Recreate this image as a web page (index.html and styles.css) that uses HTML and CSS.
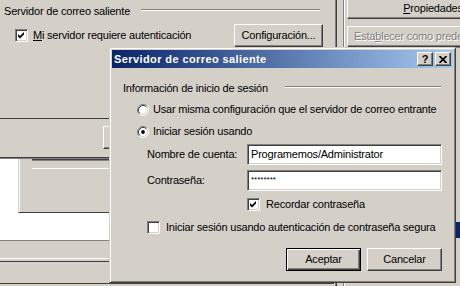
FILE: index.html
```html
<!DOCTYPE html>
<html lang="es">
<head>
<meta charset="utf-8">
<title>Servidor de correo saliente</title>
<link rel="stylesheet" href="styles.css">
</head>
<body>
<div class="screen">
  <div class="pane-left">
    <div class="group-head">
      <span class="group-label">Servidor de correo saliente</span>
      <span class="etch etch-bg"></span>
    </div>
    <div class="auth-row">
      <span class="chk">
        <span class="box"><svg class="tick" width="7" height="7" viewBox="0 0 7 7"><path d="M0 2 L2 4 L6 0 L6 2.6 L2 6.6 L0 4.6 Z" fill="#000"/></svg></span>
        <span><u>M</u>i servidor requiere autenticación</span>
      </span>
      <span class="btn btn-cfg">Confi<u>g</u>uración...</span>
    </div>
    <div class="behind">
      <div class="strip-a"><span class="btn ghost-btn"></span></div>
      <div class="strip-b">
        <div class="inner-box"><div class="inner-lines"></div></div>
      </div>
      <div class="strip-c"></div>
      <div class="strip-d"></div>
    </div>
  </div>
  <div class="divider"></div>
  <div class="pane-right">
    <span class="btn btn-wide btn-props"><u>P</u>ropiedades</span>
    <span class="btn btn-wide btn-default disabled">Esta<u>b</u>lecer como predeterminado</span>
    <div class="list">
      <div class="list-sel"></div>
    </div>
  </div>
</div>

<div class="dialog">
  <div class="titlebar">
    <span class="title">Servidor de correo saliente</span>
    <span class="tbtn help">?</span>
    <span class="tbtn close"><svg width="8" height="7" viewBox="0 0 8 7"><path d="M0.5 0 L7.5 7 M7.5 0 L0.5 7" stroke="#000" stroke-width="1.7"/></svg></span>
  </div>
  <div class="dlg-body">
    <div class="group-row">
      <span class="group-title">Información de inicio de sesión</span>
      <span class="etch"></span>
    </div>
    <div class="opt-row radio-row first">
      <svg class="radio" width="12" height="12" viewBox="0 0 12 12">
        <circle cx="6" cy="6" r="4.5" fill="#fff"/>
        <path d="M2.11 9.89 A5.5 5.5 0 0 1 9.89 2.11" fill="none" stroke="#808080"/>
        <path d="M9.89 2.11 A5.5 5.5 0 0 1 2.11 9.89" fill="none" stroke="#fff"/>
        <path d="M2.82 9.18 A4.5 4.5 0 0 1 9.18 2.82" fill="none" stroke="#404040"/>
        <path d="M9.18 2.82 A4.5 4.5 0 0 1 2.82 9.18" fill="none" stroke="#d4d0c8"/>
      </svg>
      <span>Usar misma configuración que el servidor de correo entrante</span>
    </div>
    <div class="opt-row radio-row second">
      <svg class="radio" width="12" height="12" viewBox="0 0 12 12">
        <circle cx="6" cy="6" r="4.5" fill="#fff"/>
        <path d="M2.11 9.89 A5.5 5.5 0 0 1 9.89 2.11" fill="none" stroke="#808080"/>
        <path d="M9.89 2.11 A5.5 5.5 0 0 1 2.11 9.89" fill="none" stroke="#fff"/>
        <path d="M2.82 9.18 A4.5 4.5 0 0 1 9.18 2.82" fill="none" stroke="#404040"/>
        <path d="M9.18 2.82 A4.5 4.5 0 0 1 2.82 9.18" fill="none" stroke="#d4d0c8"/>
        <circle cx="6" cy="6" r="1.9" fill="#000"/>
      </svg>
      <span>Iniciar sesión usando</span>
    </div>
    <div class="field-row name-row">
      <span class="field-label">Nombre de cuenta:</span>
      <span class="field">Programemos/Administrator</span>
    </div>
    <div class="field-row pass-row">
      <span class="field-label">Contraseña:</span>
      <span class="field pass">********</span>
    </div>
    <div class="opt-row remember-row">
      <span class="box"><svg class="tick" width="7" height="7" viewBox="0 0 7 7"><path d="M0 2 L2 4 L6 0 L6 2.6 L2 6.6 L0 4.6 Z" fill="#000"/></svg></span>
      <span>Recordar contraseña</span>
    </div>
    <div class="opt-row secure-row">
      <span class="box"></span>
      <span>Iniciar sesión usando autenticación de contraseña segura</span>
    </div>
    <div class="btn-row">
      <span class="btn dlg-btn default">Aceptar</span>
      <span class="btn dlg-btn">Cancelar</span>
    </div>
  </div>
</div>
</body>
</html>
```

FILE: styles.css
```css
* { box-sizing: border-box; }
html, body { margin: 0; padding: 0; }
body {
  width: 460px;
  height: 286px;
  overflow: hidden;
  position: relative;
  background: #d4d0c8;
  color: #000;
  font: 11px/13px "Liberation Sans", Arial, sans-serif;
  letter-spacing: -0.2px;
}
u { text-decoration: underline; text-underline-offset: 1px; }

.screen { display: flex; width: 460px; height: 286px; overflow: hidden; }

/* ---------- background window ---------- */
.pane-left { width: 334px; flex: none; }
.group-head { display: flex; align-items: flex-start; height: 24px; padding: 5px 0 0 4px; }
.group-label { width: 137px; flex: none; white-space: nowrap; }
.etch { height: 2px; border-top: 1px solid #808080; border-bottom: 1px solid #fff; }
.etch-bg { width: 179px; margin-top: 4px; }

.auth-row { display: flex; align-items: center; height: 23px; }
.chk { display: flex; align-items: center; gap: 5px; margin-left: 15px; white-space: nowrap; }

.box {
  width: 13px; height: 13px; flex: none; display: block;
  background: #fff;
  border: 1px solid; border-color: #808080 #fff #fff #808080;
  box-shadow: inset 1px 1px #404040, inset -1px -1px #d4d0c8;
}
.tick { display: block; margin: 2px; }

.btn {
  display: flex; align-items: center; justify-content: center;
  background: #d4d0c8; white-space: nowrap;
  border: 1px solid; border-color: #fff #404040 #404040 #fff;
  box-shadow: inset -1px -1px #808080, inset 1px 1px #d4d0c8;
}
.btn-cfg { width: 89px; height: 23px; margin-left: auto; margin-right: 11px; }

.behind { margin-top: 71px; }
.strip-a {
  height: 41px; padding-top: 7px;
  border-top: 1px solid #404040; border-bottom: 1px solid #808080;
  box-shadow: inset 0 -1px #404040;
}
.ghost-btn { width: 60px; height: 23px; margin-left: 103px; }
.strip-b { height: 81px; background: #fff; }
.inner-box {
  height: 54px; margin-left: 18px; background: #d4d0c8;
  border-left: 1px solid #d4d0c8; border-bottom: 1px solid #404040;
  box-shadow: inset 1px 0 #fff;
}
.inner-lines {
  height: 10px; margin-left: 13px;
  border-top: 1px solid #404040; border-bottom: 1px solid #fff;
  box-shadow: inset 0 1px #808080;
}
.strip-c {
  height: 22px;
  border-top: 1px solid #808080; border-bottom: 1px solid #404040;
  background: linear-gradient(to bottom, #d4d0c8 0 17px, #fff 17px 18px, #d4d0c8 18px);
}
.strip-d { height: 22px; border-bottom: 1px solid #404040; }

.divider {
  width: 13px; flex: none;
  background: linear-gradient(to right, #d4d0c8 0 1px, #808080 1px 2px, #404040 2px 3px, #d4d0c8 3px 9px, #808080 9px 10px, #fff 10px 11px, #d4d0c8 11px);
}
.pane-right { flex: none; width: 172px; display: flex; flex-direction: column; }
.btn-wide { width: 172px; }
.btn-props { height: 22px; margin-top: -3px; }
.btn-default { height: 21px; margin-top: 7px; }
.disabled { color: #808080; text-shadow: 1px 1px 0 #fff; justify-content: flex-start; padding-left: 6px; }
.list {
  height: 236px; background: #d4d0c8;
  border-top: 1px solid #808080;
  padding-top: 174px;
}
.list-sel { height: 16px; background: #0a246a; }

/* ---------- dialog ---------- */
.dialog {
  position: absolute; left: 109px; top: 47px;
  width: 347px; height: 236px;
  background: #d4d0c8;
  border: 1px solid; border-color: #d4d0c8 #404040 #404040 #d4d0c8;
  box-shadow: inset 1px 1px #fff, inset -1px -1px #808080;
  padding: 2px;
}
.titlebar {
  height: 18px; display: flex; align-items: center;
  padding: 0 2px 0 2px;
  background: linear-gradient(to right, #0a246a, #a6caf0);
}
.title {
  color: #fff; font-weight: bold; letter-spacing: 0.4px;
  padding-top: 1px; white-space: nowrap;
}
.tbtn {
  width: 16px; height: 14px; flex: none;
  display: flex; align-items: center; justify-content: center;
  background: #d4d0c8;
  border: 1px solid; border-color: #fff #404040 #404040 #fff;
  box-shadow: inset -1px -1px #808080;
  font-weight: bold; font-size: 11px; line-height: 12px; letter-spacing: 0;
}
.help { margin-left: auto; }
.close { margin-left: 2px; }
.tbtn svg { display: block; }

.dlg-body { padding: 0 11px 0 11px; }
.group-row { display: flex; align-items: flex-start; margin-top: 14px; }
.group-title { width: 162px; flex: none; white-space: nowrap; }
.group-row .etch { flex: 1; margin-top: 4px; margin-right: 1px; }

.opt-row { display: flex; align-items: center; height: 13px; white-space: nowrap; }
.radio { display: block; flex: none; }
.radio-row { padding-left: 14px; gap: 4px; }
.radio-row.first { margin-top: 8px; }
.radio-row.second { margin-top: 9px; }

.field-row { display: flex; align-items: center; padding-left: 24px; height: 21px; }
.name-row { margin-top: 6px; }
.pass-row { margin-top: 5px; }
.field-label { width: 100px; flex: none; white-space: nowrap; }
.field {
  width: 195px; height: 21px; flex: none;
  display: flex; align-items: center;
  padding: 0 3px 1px;
  background: #fff; white-space: nowrap;
  border: 1px solid; border-color: #808080 #fff #fff #808080;
  box-shadow: inset 1px 1px #404040, inset -1px -1px #d4d0c8;
}
.pass { font-size: 8px; letter-spacing: 0; padding-bottom: 3px; }

.remember-row { margin-top: 7px; padding-left: 124px; gap: 6px; }
.secure-row { margin-top: 10px; padding-left: 24px; gap: 6px; }

.btn-row { display: flex; justify-content: flex-end; gap: 6px; margin-top: 14px; padding-right: 0; }
.dlg-btn { width: 75px; height: 23px; }
.dlg-btn.default {
  border: 1px solid #000;
  box-shadow: inset 1px 1px #fff, inset -1px -1px #404040, inset -2px -2px #808080;
}
```
